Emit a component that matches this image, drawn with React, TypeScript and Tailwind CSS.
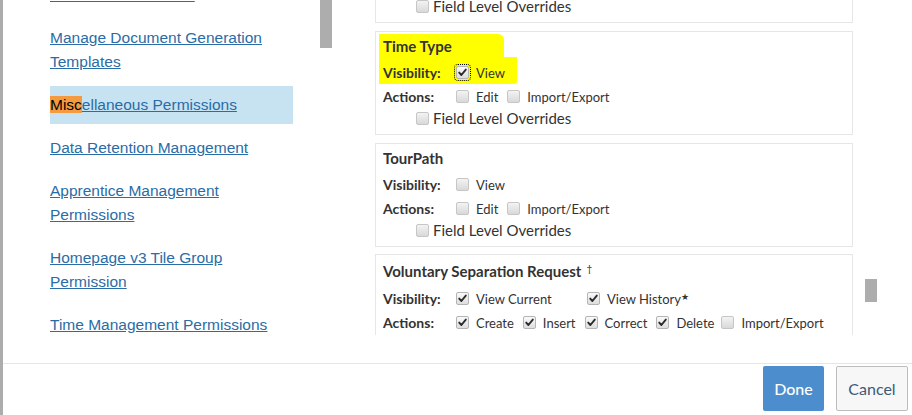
import React from "react";

type CheckProps = { checked?: boolean; focus?: boolean };

const Check: React.FC<CheckProps> = ({ checked = false, focus = false }) => (
  <span
    className={
      focus
        ? "inline-flex shrink-0 w-[13px] h-[13px] items-center justify-center rounded-[2px] border border-[#b4b4b4] bg-linear-to-b from-[#fafafa] to-[#dedede] outline outline-1 outline-dotted outline-black outline-offset-[1px]"
        : checked
        ? "inline-flex shrink-0 w-[13px] h-[13px] items-center justify-center rounded-[2px] border border-[#b4b4b4] bg-linear-to-b from-[#fafafa] to-[#dedede]"
        : "inline-flex shrink-0 w-[13px] h-[13px] items-center justify-center rounded-[2px] border border-[#c6c6c6] bg-linear-to-b from-[#f3f3f3] to-[#d9d9d9]"
    }
  >
    {checked && (
      <svg width="11" height="11" viewBox="0 0 11 11">
        <path d="M2.2 5.6 L4.4 8 L8.8 2.6" fill="none" stroke="#2b2b2b" strokeWidth="1.9" strokeLinecap="round" strokeLinejoin="round" />
      </svg>
    )}
  </span>
);

const Opt: React.FC<{ label: React.ReactNode; checked?: boolean; focus?: boolean; className?: string }> = ({
  label,
  checked,
  focus,
  className = "",
}) => (
  <span className={"inline-flex items-center " + className}>
    <Check checked={checked} focus={focus} />
    <span className="ml-[7px] pt-[4px] text-[13px] text-[#333]">{label}</span>
  </span>
);

const Label: React.FC<{ children: React.ReactNode }> = ({ children }) => (
  <span className="w-[73px] shrink-0 text-[14px] font-bold text-[#333]">{children}</span>
);

const Overrides = () => (
  <div className="h-[21px] ml-[33px] flex items-center">
    <Check />
    <span className="ml-[4px] text-[15px] text-[#333]">Field Level Overrides</span>
  </div>
);

const PermBox: React.FC<{ title: string; highlight?: boolean }> = ({ title, highlight = false }) => (
  <div className="border border-[#e6e6e6] pt-[3px] pb-[5px] px-[7px]">
    {highlight ? (
      <>
        <div className="h-[23px] -mt-[1px] pt-[1px] -ml-[4px] pl-[4px] w-[125px] bg-[#ffff00] rounded-tr-[6px] text-[15px] leading-[22px] font-bold text-[#333]">
          {title}
        </div>
        <div className="h-[27px] -ml-[4px] pl-[4px] pt-[3px] w-[138px] bg-[#ffff00] rounded-br-[3px] flex items-center">
          <Label>Visibility:</Label>
          <Opt label="View" checked focus />
        </div>
      </>
    ) : (
      <>
        <div className="h-[22px] text-[15px] leading-[22px] font-bold text-[#333]">{title}</div>
        <div className="h-[24px] mt-[3px] flex items-center">
          <Label>Visibility:</Label>
          <Opt label="View" />
        </div>
      </>
    )}
    <div className="h-[24px] flex items-center">
      <Label>Actions:</Label>
      <Opt label="Edit" />
      <Opt label="Import/Export" className="ml-[9px]" />
    </div>
    <Overrides />
  </div>
);

const NavLink: React.FC<{ children: React.ReactNode; active?: boolean }> = ({ children, active = false }) => (
  <div
    className={
      active
        ? "py-[7px] leading-[24px] text-[15.5px] text-[#2a6ca6] bg-[#c7e3f2]"
        : "py-[7px] leading-[24px] text-[15.5px] text-[#2a6ca6]"
    }
  >
    {children}
  </div>
);

export default function App() {
  return (
    <div className="w-[912px] h-[415px] flex bg-white overflow-hidden" style={{ fontFamily: "Lato, 'Liberation Sans', sans-serif" }}>
      <div className="w-[3px] shrink-0 bg-[#acacac]" />
      <div className="flex-1 flex flex-col">
        <div className="h-[363px] shrink-0 flex">
          {/* left nav */}
          <div className="w-[357px] shrink-0 h-[335px] flex overflow-hidden">
            <div
              className="w-[317px] shrink-0 pl-[47px] -mt-[24px]"
              style={{ fontFamily: "'Liberation Sans', Arial, sans-serif" }}
            >
              <div className="w-[243px] flex flex-col gap-[5px]">
                <NavLink>
                  <span className="underline">Reset User Accounts</span>
                </NavLink>
                <NavLink>
                  <span className="underline">Manage Document Generation</span>
                  <br />
                  <span className="underline">Templates</span>
                </NavLink>
                <NavLink active>
                  <span className="bg-[#f59a3e] text-black">Misc</span>
                  <span className="underline">ellaneous Permissions</span>
                </NavLink>
                <NavLink>
                  <span className="underline">Data Retention Management</span>
                </NavLink>
                <NavLink>
                  <span className="underline">Apprentice Management</span>
                  <br />
                  <span className="underline">Permissions</span>
                </NavLink>
                <NavLink>
                  <span className="underline">Homepage v3 Tile Group</span>
                  <br />
                  <span className="underline">Permission</span>
                </NavLink>
                <NavLink>
                  <span className="underline">Time Management Permissions</span>
                </NavLink>
              </div>
            </div>
            <div className="w-[12px] shrink-0">
              <div className="h-[48px] bg-[#adadad]" />
            </div>
          </div>

          {/* right permissions */}
          <div className="h-[335px] flex overflow-hidden">
            <div className="ml-[15px] w-[478px] shrink-0 flex flex-col gap-[8px] -mt-[81px]">
              <PermBox title="Time Sheet" />
              <PermBox title="Time Type" highlight />
              <PermBox title="TourPath" />
              <div className="-mt-[1px] border border-[#e6e6e6] pt-[5px] pb-[5px] px-[7px]">
                <div className="h-[22px] text-[15px] leading-[22px] font-bold text-[#333]">
                  Voluntary Separation Request
                  <sup className="ml-[5px] text-[10px] font-normal">†</sup>
                </div>
                <div className="h-[24px] mt-[4px] flex items-center">
                  <Label>Visibility:</Label>
                  <Opt label="View Current" checked className="w-[131px]" />
                  <Opt
                    label={
                      <>
                        View History<sup className="text-[9px]">★</sup>
                      </>
                    }
                    checked
                  />
                </div>
                <div className="h-[24px] flex items-center">
                  <Label>Actions:</Label>
                  <Opt label="Create" checked />
                  <Opt label="Insert" checked className="ml-[9px]" />
                  <Opt label="Correct" checked className="ml-[9px]" />
                  <Opt label="Delete" checked className="ml-[9px]" />
                  <Opt label="Import/Export" className="ml-[7px]" />
                </div>
                <div className="h-[24px]" />
              </div>
            </div>
            <div className="ml-[12px] w-[12px] shrink-0 pt-[279px]">
              <div className="h-[23px] bg-[#adadad]" />
            </div>
          </div>
        </div>

        {/* footer */}
        <div className="flex-1 border-t border-[#e5e5e5] flex justify-end items-start pt-[2px] pr-[4px] gap-[12px]">
          <button className="w-[61px] h-[45px] rounded-[2px] bg-[#4c8ecd] text-white text-[16px] font-medium">
            Done
          </button>
          <button className="w-[72px] h-[45px] rounded-[2px] border border-[#bdbdbd] bg-[#f7f7f7] text-[#3d5a78] text-[16px]">
            Cancel
          </button>
        </div>
      </div>
    </div>
  );
}
